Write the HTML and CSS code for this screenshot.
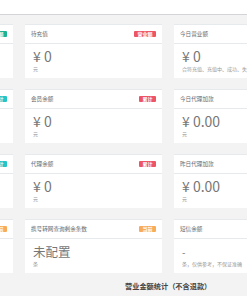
FILE: index.html
```html
<!DOCTYPE html>
<html lang="zh">

<head>
  <meta charset="utf-8">
  <title>控制台</title>
  <link rel="stylesheet" href="styles.css">
</head>

<body>
  <!--- 顶部导航 -->
  <div class="topbar"></div>

  <div class="wrap">
    <div class="grid">
      <!--- 第一行 -->
      <div class="ibox">
        <div class="ibox-title"><span></span><span class="label label-primary">营业额</span></div>
      </div>
      <div class="ibox">
        <div class="ibox-title"><span>待充值</span><span class="label label-danger">营业额</span></div>
        <div class="ibox-content">
          <div class="num">¥ 0</div>
          <div class="unit">元</div>
        </div>
      </div>
      <div class="ibox">
        <div class="ibox-title"><span>今日营业额</span></div>
        <div class="ibox-content">
          <div class="num">¥ 0</div>
          <div class="unit">合符充值、充值中、成功、失败</div>
        </div>
      </div>

      <!--- 第二行 -->
      <div class="ibox">
        <div class="ibox-title"><span></span><span class="label label-info">累计</span></div>
      </div>
      <div class="ibox">
        <div class="ibox-title"><span>会员余额</span><span class="label label-danger">累计</span></div>
        <div class="ibox-content">
          <div class="num">¥ 0</div>
          <div class="unit">元</div>
        </div>
      </div>
      <div class="ibox">
        <div class="ibox-title"><span>今日代理加款</span></div>
        <div class="ibox-content">
          <div class="num">¥ 0.00</div>
          <div class="unit">元</div>
        </div>
      </div>

      <!--- 第三行 -->
      <div class="ibox">
        <div class="ibox-title"><span></span><span class="label label-info">累计</span></div>
      </div>
      <div class="ibox">
        <div class="ibox-title"><span>代理余额</span><span class="label label-danger">累计</span></div>
        <div class="ibox-content">
          <div class="num">¥ 0</div>
          <div class="unit">元</div>
        </div>
      </div>
      <div class="ibox">
        <div class="ibox-title"><span>昨日代理加款</span></div>
        <div class="ibox-content">
          <div class="num">¥ 0.00</div>
          <div class="unit">元</div>
        </div>
      </div>

      <!--- 第四行 -->
      <div class="ibox">
        <div class="ibox-title"><span></span><span class="label label-warning">当前</span></div>
      </div>
      <div class="ibox">
        <div class="ibox-title"><span>携号转网查询剩余条数</span><span class="label label-warning">当前</span></div>
        <div class="ibox-content">
          <div class="num word">未配置</div>
          <div class="unit">条</div>
        </div>
      </div>
      <div class="ibox">
        <div class="ibox-title"><span>短信余额</span></div>
        <div class="ibox-content">
          <div class="num dash">-</div>
          <div class="unit">条，仅供参考，不保证准确</div>
        </div>
      </div>
    </div>

    <h3 class="section">营业金额统计（不含退款）</h3>
  </div>
</body>

</html>
```

FILE: styles.css
```css
html,
body {
  margin: 0;
  padding: 0;
  overflow: hidden;
}

body {
  background-color: #f3f3f4;
  font-family: "Noto Sans CJK SC", "Noto Sans", sans-serif;
  color: #676a6c;
}

.topbar {
  height: 14px;
  background-color: #fff;
  border-bottom: 1px solid #d4d4d8;
}

.wrap {
  padding-top: 9px;
}

.grid {
  display: grid;
  grid-template-columns: 137px 137px 137px;
  column-gap: 12px;
  row-gap: 11px;
  margin-left: -124px;
}

.ibox {
  height: 54px;
  background-color: #fff;
  border-top: 1px solid #e7eaec;
  box-sizing: border-box;
}

.ibox-title {
  height: 18px;
  padding: 0 6px;
  display: flex;
  align-items: center;
  justify-content: space-between;
  font-size: 5.6px;
  color: #676a6c;
  border-bottom: 1px solid #e7eaec;
}

.label {
  padding: 1px 3.5px;
  line-height: 4.5px;
  font-size: 5px;
  font-weight: bold;
  color: #fff;
  border-radius: 1px;
}

.label-primary {
  background-color: #1ab394;
}

.label-info {
  background-color: #23c6c8;
}

.label-danger {
  background-color: #ed5565;
}

.label-warning {
  background-color: #f8ac59;
}

.ibox-content {
  padding: 3.5px 8px 0 8px;
}

.num {
  font-size: 14px;
  line-height: 17px;
  color: #777;
  white-space: nowrap;
}

.num.word {
  font-size: 12.5px;
}

.num.dash {
  font-size: 10px;
}

.unit {
  font-size: 5px;
  line-height: 7px;
  color: #999;
  white-space: nowrap;
}

.section {
  margin: 8px 0 0 0;
  padding-left: 125px;
  font-size: 7.2px;
  font-weight: bold;
  color: #444;
}
```
